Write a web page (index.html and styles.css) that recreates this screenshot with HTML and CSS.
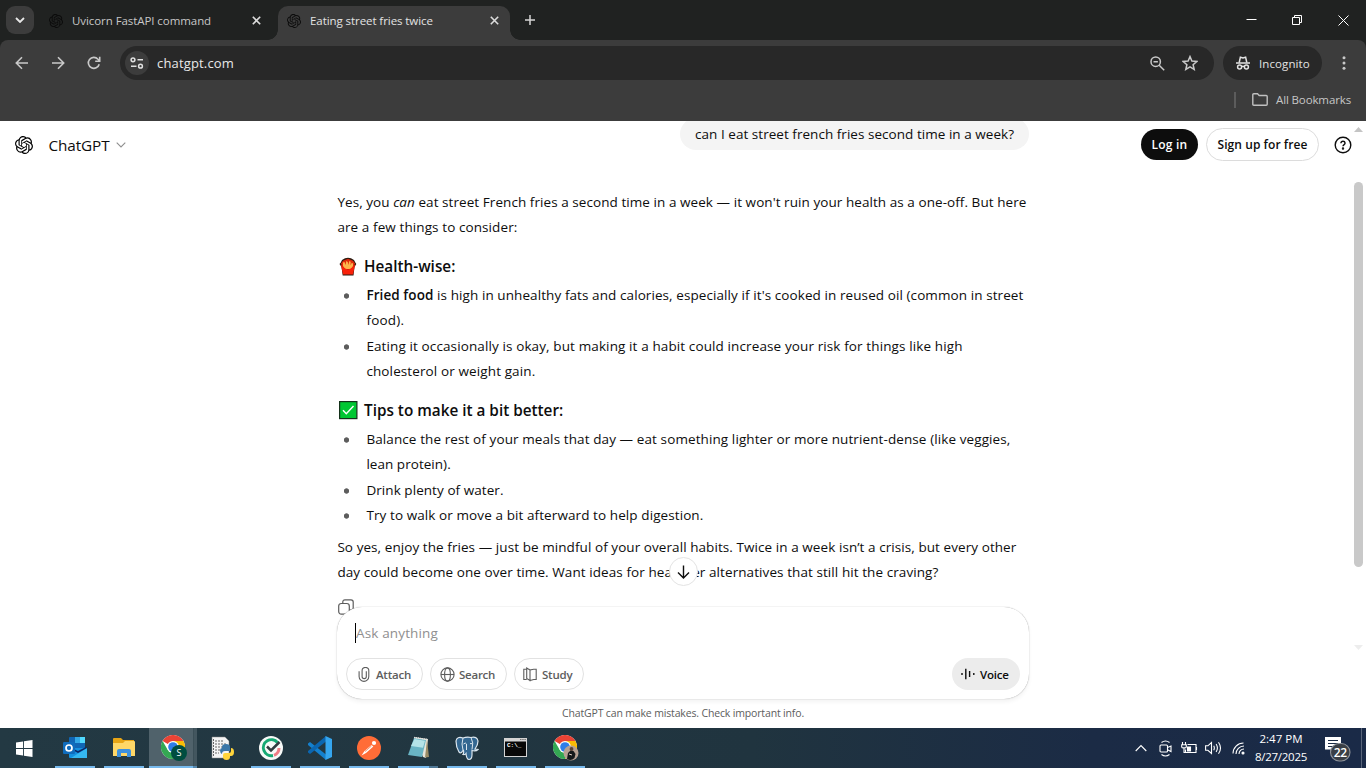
FILE: index.html
```html
<!DOCTYPE html>
<html lang="en">
<head>
<meta charset="utf-8">
<title>Eating street fries twice</title>
<link rel="stylesheet" href="styles.css">
</head>
<body>
<svg width="0" height="0" class="defs">
  <symbol id="knot" viewBox="0 0 24 24"><path d="M22.2819 9.8211a5.9847 5.9847 0 0 0-.5157-4.9108 6.0462 6.0462 0 0 0-6.5098-2.9A6.0651 6.0651 0 0 0 4.9807 4.1818a5.9847 5.9847 0 0 0-3.9977 2.9 6.0462 6.0462 0 0 0 .7427 7.0966 5.98 5.98 0 0 0 .511 4.9107 6.051 6.051 0 0 0 6.5146 2.9001A5.9847 5.9847 0 0 0 13.2599 24a6.0557 6.0557 0 0 0 5.7718-4.2058 5.9894 5.9894 0 0 0 3.9977-2.9001 6.0557 6.0557 0 0 0-.7475-7.0729zm-9.022 12.6081a4.4755 4.4755 0 0 1-2.8764-1.0408l.1419-.0804 4.7783-2.7582a.7948.7948 0 0 0 .3927-.6813v-6.7369l2.02 1.1686a.071.071 0 0 1 .038.0615v5.5826a4.504 4.504 0 0 1-4.4945 4.4944zm-9.6607-4.1254a4.4708 4.4708 0 0 1-.5346-3.0137l.142.0852 4.783 2.7582a.7712.7712 0 0 0 .7806 0l5.8428-3.3685v2.3324a.0804.0804 0 0 1-.0332.0615L9.74 19.9502a4.4992 4.4992 0 0 1-6.1408-1.6464zM2.3408 7.8956a4.485 4.485 0 0 1 2.3655-1.9728V11.6a.7664.7664 0 0 0 .3879.6765l5.8144 3.3543-2.0201 1.1685a.0757.0757 0 0 1-.071 0l-4.8303-2.7865A4.504 4.504 0 0 1 2.3408 7.872zm16.5963 3.8558L13.1038 8.364 15.1192 7.2a.0757.0757 0 0 1 .071 0l4.8303 2.7913a4.4944 4.4944 0 0 1-.6765 8.1042v-5.6772a.79.79 0 0 0-.407-.667zm2.0107-3.0231l-.142-.0852-4.7735-2.7818a.7759.7759 0 0 0-.7854 0L9.409 9.2297V6.8974a.0662.0662 0 0 1 .0284-.0615l4.8303-2.7866a4.4992 4.4992 0 0 1 6.6802 4.66zM8.3065 12.863l-2.02-1.1638a.0804.0804 0 0 1-.038-.0567V6.0742a4.4992 4.4992 0 0 1 7.3757-3.4537l-.142.0805L8.704 5.459a.7948.7948 0 0 0-.3927.6813zm1.0976-2.3654l2.602-1.4998 2.6069 1.4998v2.9994l-2.5974 1.4997-2.6067-1.4997Z"/></symbol>
  <symbol id="chrome" viewBox="0 0 24 24">
    <circle cx="12" cy="12" r="12" fill="#fff"/>
    <path fill="#ea4335" d="M12 12 1.6 6A12 12 0 0 1 22.4 6z"/>
    <path fill="#fbbc05" d="M12 6h10.4A12 12 0 0 1 12 24l5.2-9z"/>
    <path fill="#34a853" d="M1.6 6 6.8 15 12 17.8l3.6-.6L12 24A12 12 0 0 1 1.6 6z"/>
    <circle cx="12" cy="12" r="6" fill="#fff"/><circle cx="12" cy="12" r="4.8" fill="#2f7de9"/>
  </symbol>
</svg>

<header class="tabstrip">
  <div class="tab-search"><svg width="10" height="6" viewBox="0 0 10 6"><path d="M1 1l4 4 4-4" fill="none" stroke="#e8e8e8" stroke-width="1.8"/></svg></div>
  <div class="tab"><svg class="fav" width="14" height="14"><use href="#knot"/></svg><span class="tab-title t-tab1">Uvicorn FastAPI command</span><svg class="tab-x" width="9" height="9" viewBox="0 0 9 9"><path d="M.8.8l7.4 7.4M8.200.8L.8 8.200"/></svg></div>
  <div class="tab active"><svg class="fav" width="14" height="14"><use href="#knot"/></svg><span class="tab-title t-tab2">Eating street fries twice</span><svg class="tab-x" width="9" height="9" viewBox="0 0 9 9"><path d="M.8.8l7.4 7.4M8.200.8L.8 8.200"/></svg></div>
  <svg class="new-tab" width="10" height="10" viewBox="0 0 10 10"><path d="M5 0v10M0 5h10" stroke="#d5d5d5" stroke-width="1.5"/></svg>
  <div class="win-buttons">
    <svg width="11" height="11" viewBox="0 0 11 11"><path d="M.5 4.500h10"/></svg>
    <svg width="11" height="11" viewBox="0 0 11 11"><path d="M.5 2.500h7v7h-7zM2.500 2.500v-2h7v7h-2"/></svg>
    <svg width="11" height="11" viewBox="0 0 11 11"><path d="M.5.5l10 10M10.500.5l-10 10"/></svg>
  </div>
</header>

<div class="toolbar">
  <div class="nav-row">
    <svg class="nav" width="14" height="14" viewBox="0 0 14 14"><path d="M13 7H1.500M7 1.300L1.300 7 7 12.700"/></svg>
    <svg class="nav" width="14" height="14" viewBox="0 0 14 14"><path d="M1 7h11.500M7 1.300L12.700 7 7 12.700"/></svg>
    <svg class="nav" width="14" height="14" viewBox="0 0 14 14"><path d="M12.200 8.200A5.500 5.500 0 1 1 11 3.200l1.500 1.600M12.700.8v4.400H8.200"/></svg>
    <div class="omnibox">
      <span class="site-info"><svg width="14" height="12" viewBox="0 0 14 12"><circle cx="3" cy="2.800" r="1.900"/><path d="M7.500 2.800h5.500M1 9.200h5.500"/><circle cx="10.500" cy="9.200" r="1.900"/></svg></span>
      <span class="url">chatgpt.com</span>
      <svg class="ob-icon" width="15" height="15" viewBox="0 0 15 15"><circle cx="5.700" cy="5.700" r="4.700"/><path d="M9.200 9.200l5 5M3.500 5.700h4.400"/></svg>
      <svg class="ob-icon" width="16" height="16" viewBox="0 0 16 16"><path d="M8 1.600l1.900 4.500 4.900.4-3.700 3.200 1.100 4.700L8 11.900l-4.200 2.500 1.100-4.700L1.200 6.500l4.900-.4z"/></svg>
    </div>
    <div class="incognito">
      <svg width="14" height="14" viewBox="0 0 14 14"><path d="M0 7h14" /><path d="M3.200 6.500L4.400 1.200l2.600.7 2.600-.7 1.200 5.300"/><circle cx="3.600" cy="11" r="2"/><circle cx="10.400" cy="11" r="2"/><path d="M5.600 10.700q1.400-.8 2.800 0"/></svg>
      <span class="t-inc">Incognito</span>
    </div>
    <svg class="kebab" width="4" height="14" viewBox="0 0 4 14"><circle cx="2" cy="1.800" r="1.500"/><circle cx="2" cy="7" r="1.500"/><circle cx="2" cy="12.200" r="1.500"/></svg>
  </div>
  <div class="bookmarks">
    <i class="bm-sep"></i>
    <svg width="16" height="13" viewBox="0 0 16 13"><path d="M.8 1.800q0-1 1-1h3.700l1.700 1.700h7q1 0 1 1v7.700q0 1-1 1H1.800q-1 0-1-1z"/></svg>
    <span class="t-bm">All Bookmarks</span>
  </div>
</div>

<main class="page">
  <div class="thread">
    <div class="bubble"><span class="t-q">can I eat street french fries second time in a week?</span></div>
    <article class="answer">
      <p><span class="ln l1">Yes, you <em>can</em> eat street French fries a second time in a week — it won't ruin your health as a one-off. But here</span><span class="ln l2">are a few things to consider:</span></p>
      <h3><svg width="20" height="20" viewBox="0 0 20 20"><path d="M2.800 5.500L4 3l3-1.800 3-.5 3 .5 3 1.800 1.300 2.500L18.300 7l-1.800 3-1 8.500H4.700L3.500 10 1.500 7z" fill="#2b1a10"/><path d="M3 6.500l2-2.800L10 1.800l5 1.900 2 2.800-2 5H5z" fill="#e02a0c"/><path d="M5 9V5.500L6.500 5l1 3 .8-4 1.500 1 .5 3 1-4 1.400.8-.2 3.400 1.300-2.400L15 6.500V9l-2 3H7z" fill="#fdb44b"/><path d="M2.800 7.500l2.700 2.700q4.500 4 9 0l2.700-2.700-2.200 10H5z" fill="#f8210a"/></svg><span class="h1">Health-wise:</span></h3>
      <ul>
        <li><span class="ln l3"><b>Fried food</b> is high in unhealthy fats and calories, especially if it's cooked in reused oil (common in street</span><span class="ln l4">food).</span></li>
        <li><span class="ln l5">Eating it occasionally is okay, but making it a habit could increase your risk for things like high</span><span class="ln l6">cholesterol or weight gain.</span></li>
      </ul>
      <h3><svg width="20" height="20" viewBox="0 0 20 20"><rect x="1.600" y="1.600" width="17.300" height="17" fill="#00c732" stroke="#14311a" stroke-width="1.200"/><path d="M5 10.200l3.300 3.500L15.500 6" fill="none" stroke="#fff" stroke-width="1.400"/></svg><span class="h2">Tips to make it a bit better:</span></h3>
      <ul>
        <li><span class="ln l7">Balance the rest of your meals that day — eat something lighter or more nutrient-dense (like veggies,</span><span class="ln l8">lean protein).</span></li>
        <li><span class="ln l9">Drink plenty of water.</span></li>
        <li><span class="ln l10">Try to walk or move a bit afterward to help digestion.</span></li>
      </ul>
      <p class="last"><span class="ln l11">So yes, enjoy the fries — just be mindful of your overall habits. Twice in a week isn’t a crisis, but every other</span><span class="ln l12">day could become one over time. Want ideas for healthier alternatives that still hit the craving?</span></p>
      <svg class="copy" width="16" height="16" viewBox="0 0 16 16"><rect x=".7" y="4.500" width="10.600" height="10.600" rx="2.500"/><path d="M4.800 4.300V3q0-2.200 2.200-2.200h6q2.200 0 2.200 2.200v6q0 2-2.200 2.200h-1.500"/></svg>
    </article>
  </div>

  <div class="page-head">
    <svg class="logo" width="18" height="18"><use href="#knot"/></svg>
    <span class="brand">ChatGPT</span>
    <svg class="chev" width="10" height="6" viewBox="0 0 10 6"><path d="M.7.7L5 5 9.300.7" fill="none" stroke="#8f8f8f" stroke-width="1.100"/></svg>
    <button class="login"><span class="t-login">Log in</span></button>
    <button class="signup"><span class="t-signup">Sign up for free</span></button>
    <svg class="help" width="18" height="18" viewBox="0 0 18 18"><circle cx="9" cy="9" r="7.800"/><path d="M6.900 7.300q.2-2 2.100-2t2.100 1.800q0 1-1.200 1.700-.8.5-.9 1.500"/><circle cx="9" cy="12.500" r=".5"/></svg>
  </div>

  <div class="scrollbar"><i class="up"></i><i class="thumb"></i><i class="down"></i></div>

  <div class="dock">
    <div class="down-btn"><svg width="13" height="14" viewBox="0 0 13 14"><path d="M6.500.5v12.300M1 7.500l5.500 5.400L12 7.500"/></svg></div>
    <div class="composer">
      <div class="input"><span class="t-ask">Ask anything</span></div>
      <div class="actions">
        <button class="pill attach"><svg width="12" height="15" viewBox="0 0 12 15"><path d="M8.300 4.300v5.200a2.100 2.100 0 0 1-4.200 0V3.800a3.200 3.200 0 0 1 6.700 0v5.700a4.700 4.700 0 0 1-9.700 0V4.300"/></svg><span class="t-att">Attach</span></button>
        <button class="pill search"><svg width="15" height="15" viewBox="0 0 15 15"><circle cx="7.500" cy="7.500" r="6.600"/><ellipse cx="7.500" cy="7.500" rx="2.900" ry="6.600"/><path d="M1 7.500h13"/></svg><span class="t-sea">Search</span></button>
        <button class="pill study"><svg width="14" height="15" viewBox="0 0 14 15"><path d="M7 3v10.500l3.700-1h2.500V2.300h-2.500zM7 3L5.800 2.300M3.700 2.300H.8v10.200h2.900M3.700 1l3.300 2v10.500l-3.300-2z"/></svg><span class="t-stu">Study</span></button>
        <button class="voice"><svg width="14" height="12" viewBox="0 0 14 12"><path d="M1 5v2M4.800.8v10.400M8.600 3v6M12.800 5v2"/></svg><span class="t-voi">Voice</span></button>
      </div>
    </div>
    <div class="note"><span class="t-note">ChatGPT can make mistakes. Check important info.</span></div>
  </div>
</main>

<footer class="taskbar">
  <div class="task start"><svg width="17" height="17" viewBox="0 0 17 17"><path fill="#fff" d="M0 2.400l7-1v6.700H0zM7.900 1.300L16.500 0v8.100H7.900zM0 8.900h7v6.700l-7-1zM7.900 8.900h8.600V17l-8.600-1.300z"/></svg></div>
  <div class="task open"><svg width="26" height="24" viewBox="0 0 26 24"><rect x="7" y="1" width="16" height="12" rx="1" fill="#1066b5"/><path fill="#32a9e7" d="M13 1h10v6H13z"/><path fill="#50d9ff" d="M18 1h5v6h-5z"/><path fill="#0b4a8c" d="M8 7h5v8H8z"/><path fill="#1490df" d="M7 12h18v9q0 1-1 1H8q-1 0-1-1z"/><path fill="#35b8f1" d="M25 12v10L9 22z"/><path fill="#0a2767" d="M7 12l9 5 9-5-1-1-8 4-9-4z"/><rect x="1" y="6" width="12" height="12" rx="1.200" fill="#0f6cbd"/><circle cx="7" cy="12" r="3" fill="none" stroke="#fff" stroke-width="1.700"/></svg></div>
  <div class="task open"><svg width="22" height="20" viewBox="0 0 22 20"><path fill="#e8a515" d="M0 1q0-1 1-1h7l2 2h11v4H0z"/><path fill="#ffd767" d="M0 5h10l2-2h9q1 0 1 1v14H0z"/><path fill="#3e91dd" d="M4 19v-6q0-2 2-2h10q2 0 2 2v6h-4v-4H8v4z"/></svg></div>
  <div class="task open current"><svg width="28" height="26" viewBox="-2 0 28 26"><use href="#chrome" x="0" y="0" width="24" height="24"/><circle cx="18" cy="18" r="8" fill="#004d40"/><text x="18" y="21.200" text-anchor="middle" class="badge-s">S</text></svg></div>
  <div class="task"><svg width="26" height="24" viewBox="-2 0 26 24"><path fill="#f4f4f4" stroke="#888" stroke-width=".5" d="M1 1h13l4 4v17H1z"/><path stroke="#666" stroke-width="1" d="M4 5h9M4 8h11M4 11h10M4 14h5M4 17h4M2.500 3v17" stroke-dasharray="2 1"/><path fill="#3b77a8" d="M11 11q0-3 4-3t4 3v4h-5q-3 0-3 3-2-1-2-3.500T11 12z"/><path fill="#ffd43b" d="M20 12q3 0 3 4t-3 4h-1v1q0 3-3.500 3T12 21v-2q0-2 2-2h4q2 0 2-2z"/></svg></div>
  <div class="task open"><svg width="24" height="24" viewBox="0 0 24 24"><circle cx="12" cy="12" r="12" fill="#f7faf8"/><path d="M18.500 6.500A8 8 0 1 0 14 19.500" fill="none" stroke="#16a974" stroke-width="3"/><path d="M15 19.300A8 8 0 0 0 20 12" fill="none" stroke="#ef7d86" stroke-width="3"/><path d="M8 10.500l4 4L20.500 6" fill="none" stroke="#303b40" stroke-width="2.500"/></svg></div>
  <div class="task open"><svg width="24" height="24" viewBox="0 0 24 24"><path fill="#1480ce" d="M0 7.500L2 6l16 12.500V24L0 9z"/><path fill="#0b66b0" d="M0 16.500L2 18 18 5.500V0L0 15z"/><path fill="#35a6ef" d="M17.500 0L24 3v18l-6.500 3z"/></svg></div>
  <div class="task open"><svg width="24" height="24" viewBox="0 0 24 24"><circle cx="12" cy="12" r="12" fill="#ff6c37"/><path fill="#fff" d="M4.500 19.500L7.500 15l7-6 1.800 1.500-7.300 6.500z"/><circle cx="17" cy="7" r="2.100" fill="#fff"/><path stroke="#e2501e" d="M8 15.500l6.500-5.500" stroke-width=".6"/></svg></div>
  <div class="task open stacked"><svg width="24" height="24" viewBox="0 0 24 24"><path fill="#e8e5da" d="M8 1l14 2-2 19-3-1z"/><path fill="#9a8b65" d="M21 4l2 17-4 .5z"/><path fill="#69b4c4" d="M8 2l12 2-4 17-14-2z"/><path fill="#b5e3e8" d="M8.500 3l10.500 1.800-2 7L5 10z"/><path stroke="#ddd" stroke-width="1.500" stroke-dasharray="1 1" d="M8 1.500l13 2"/></svg></div>
  <div class="task open"><svg width="24" height="25" viewBox="0 0 24 25"><path fill="#336791" stroke="#dce7ef" stroke-width="1.200" d="M8 2Q2 0 1 5q0 6 3 11 2 2 3.500-1l1-.5q.5 3-.5 4 2 .5 3-1 .5 6 3 6 3 0 3-5v-4q4 1 6-1l-3-.5Q23 9 23 5q-1-5-7-3.500Q12 .5 8 2z"/><path fill="none" stroke="#dce7ef" d="M8 2Q6 8 8 14M16 1.500q3 5 1 12M8.500 8q2-2 3 0v6M15 7.500q1 .5 2 0"/></svg></div>
  <div class="task open"><svg width="24" height="20" viewBox="0 0 24 20"><path fill="#d4d4d4" d="M0 0h23v19H0z"/><path fill="#080808" d="M1 3.500h21V18H1z"/><path stroke="#777" stroke-width="1" d="M16 1.500h6" stroke-dasharray="1.500 .7"/><text x="3" y="9" class="cmd">C:\_</text></svg></div>
  <div class="task open"><svg width="28" height="26" viewBox="-2 0 28 26"><use href="#chrome" x="0" y="0" width="24" height="24"/><circle cx="18" cy="18" r="7.500" fill="#b7a193"/><path fill="#16191b" d="M14 24l1-6 2.500-2.500 3 .5 2 3-1 4q-3.500 3.500-7.500 1z"/><circle cx="18.500" cy="14" r="1.900" fill="#5b4337"/><path stroke="#e6d3c6" stroke-width="1" d="M16 19l3 1"/></svg></div>

  <div class="tray">
    <svg class="tr-up" width="12" height="8" viewBox="0 0 12 8"><path d="M.7 7L6 1.500 11.300 7"/></svg>
    <svg class="tr-cam" width="13" height="17" viewBox="0 0 13 17"><rect x="1" y="5" width="7.500" height="7" rx="1"/><path d="M8.500 7.500L12 6v5.500l-3.500-1.700M2.500 2.500q4-3 8 0M2.500 14.500q4 3 8 0"/></svg>
    <svg class="tr-bat" width="17" height="12" viewBox="0 0 17 12"><path d="M6.500 2.500H15v8H4.500V7.500M15.500 5v3M1.500 0v2.500M4.500 0v2.500M.7 2.700h4.600v2.200q0 1-2.300 1t-2.300-1zM3 6v4.500h2"/><path d="M6.500 5h3v4h-3z" fill="#fff"/></svg>
    <svg class="tr-vol" width="17" height="14" viewBox="0 0 17 14"><path d="M.6 4.800h2.300L6.500 1.500v11L2.900 9.300H.6zM8.700 4.800q1.300 2.200 0 4.400M11.100 3q2.600 4 0 8M13.500 1.200q4 5.800 0 11.600"/></svg>
    <svg class="tr-net" width="13" height="13" viewBox="0 0 13 13"><path d="M1 11.500A10.500 10.500 0 0 1 11.500 1M4 12a8 8 0 0 1 8-8M7 12a5 5 0 0 1 5-5"/><circle cx="11" cy="11" r="1" fill="#fff"/></svg>
    <div class="clock"><span class="t-time">2:47 PM</span><span class="t-date">8/27/2025</span></div>
    <svg class="tr-note" width="28" height="28" viewBox="0 0 28 28"><path fill="#fff" d="M0 3h16v12.500H9l-3.500 3.500v-3.500H0z"/><path stroke="#1a2b45" stroke-width="1" d="M3 6.500h10M3 9.500h10M3 12.500h6"/><rect x="5.500" y="9.500" width="19.500" height="17.500" rx="8.700" fill="#3a3f46" stroke="#8d9299"/><text x="15.300" y="22.500" text-anchor="middle" class="count">22</text></svg>
    <i class="desk"></i>
  </div>
</footer>
</body>
</html>
```
FILE: styles.css
```css
* { box-sizing: border-box; }
body { margin: 0; width: 1366px; height: 768px; overflow: hidden; display: flex; flex-direction: column; font-family: "Open Sans", "Noto Sans", sans-serif; background: #202221; }
svg { display: block; flex: none; }
span { white-space: nowrap; }
button { font-family: inherit; margin: 0; padding: 0; border: 0; background: none; }
.defs { position: absolute; }

/* browser chrome */
.tabstrip { height: 40px; flex: none; background: #202221; display: flex; padding-left: 6px; }
.tab-search { width: 28px; height: 28px; margin: 6px 6px 0 0; border-radius: 9px; background: #3c3c3c; display: flex; align-items: center; justify-content: center; }
.tab { width: 232px; margin-top: 6px; height: 34px; display: flex; align-items: center; padding: 0 11px 5px 9px; font-size: 11.500px; color: #c7c7c7; border-radius: 10px 10px 0 0; }
.tab:not(.active) { margin-right: 6px; }
.tab.active { background: #3c3c3c; color: #e3e3e3; position: relative; }
.tab.active::before, .tab.active::after { content: ""; position: absolute; bottom: 0; width: 10px; height: 10px; }
.tab.active::before { left: -10px; background: radial-gradient(circle at 0 0, transparent 9.500px, #3c3c3c 10px); }
.tab.active::after { right: -10px; background: radial-gradient(circle at 100% 0, transparent 9.500px, #3c3c3c 10px); }
.fav { fill: #0b0b0b; }
.tab .fav { margin-right: 9px; }
.tab-title { line-height: 16px; }
.t-tab1, .t-tab2 { letter-spacing: -.07px; }
.tab-x { margin-left: auto; stroke: #dcdcdc; stroke-width: 1.6; }
.new-tab { margin: 15px 0 0 15px; }
.win-buttons { margin-left: auto; display: flex; gap: 35px; padding: 15px 17px 0 0; }
.win-buttons svg { fill: none; stroke: #fff; stroke-width: 1; }
.toolbar { height: 81px; flex: none; background: #3c3c3c; border-radius: 8px 8px 0 0; }
.nav-row { display: flex; align-items: center; height: 46px; padding-left: 15px; }
.nav { margin-right: 22px; fill: none; stroke: #c9c9c9; stroke-width: 1.6; }
.nav + .nav + .nav { margin-right: 19px; }
.omnibox { width: 1094px; height: 34px; border-radius: 17px; background: #282828; display: flex; align-items: center; padding: 0 16px 0 5px; }
.site-info { width: 24px; height: 24px; border-radius: 50%; background: #3c3c3c; display: flex; align-items: center; justify-content: center; }
.site-info svg { fill: none; stroke: #e0e0e0; stroke-width: 1.5; }
.url { margin-left: 8px; font-size: 13px; color: #e8e8e8; margin-right: auto; letter-spacing: .16px; }
.ob-icon { margin-left: 17px; fill: none; stroke: #c9c9c9; stroke-width: 1.5; }
.incognito { width: 99px; height: 34px; margin-left: 9px; border-radius: 17px; background: #282828; display: flex; align-items: center; padding-left: 13px; gap: 9px; color: #e3e3e3; font-size: 11.500px; letter-spacing: .1px; }
.incognito svg { fill: none; stroke: #e3e3e3; stroke-width: 1.5; }
.kebab { margin-left: 20px; fill: #c9c9c9; }
.bookmarks { display: flex; align-items: center; justify-content: flex-end; height: 27px; padding-right: 15px; color: #c7c7c7; font-size: 11.500px; letter-spacing: -.126px; }
.bm-sep { width: 2px; height: 16px; background: #5c5c5c; margin-right: 16px; }
.bookmarks svg { margin-right: 8px; fill: none; stroke: #c0c0c0; stroke-width: 1.4; }

/* chat page */
.page { height: 607px; flex: none; position: relative; overflow: hidden; background: #fff; color: #0d0d0d; }
.thread { width: 692px; margin: -3px auto 0; display: flex; flex-direction: column; font-size: 13.500px; line-height: 25.200px; }
.bubble { align-self: flex-end; height: 32px; width: 349px; padding-left: 15px; background: #f4f4f4; border-radius: 16px; line-height: 32px; letter-spacing: .038px; }
.answer { padding-top: 39.600px; }
.answer p { margin: 0; }
.ln { display: block; padding-left: .4px; }
.l1 { letter-spacing: .062px; }
.l2 { letter-spacing: .093px; }
.l3 { letter-spacing: .085px; }
.l4 { letter-spacing: .2px; }
.l5, .l6 { letter-spacing: .115px; }
.l7 { letter-spacing: .1px; }
.l8 { letter-spacing: .04px; }
.l9 { letter-spacing: .06px; }
.l10 { letter-spacing: .091px; }
.l11 { letter-spacing: .07px; }
.l12 { letter-spacing: .078px; }
.answer h3 { margin: 14px 0 4px; height: 25px; display: flex; align-items: center; font-size: 15.300px; font-weight: 600; }
.answer h3 svg { margin: 0 6px 0 1px; }
.answer ul { margin: 0; padding: 0; list-style: none; }
.answer li { padding-left: 29px; background: radial-gradient(circle at 9.500px 13px, #5d5d5d 2.300px, transparent 3px) no-repeat; }
.answer li + li { position: relative; top: .5px; }
.answer b { font-weight: 600; }
.answer .last { margin-top: 7px; }
.copy { margin: 14px 0 0 1px; fill: none; stroke: #5d5d5d; stroke-width: 1.200; }
.page-head { position: absolute; top: 0; left: 0; width: 1352px; height: 47px; display: flex; align-items: center; padding-left: 15px; }
.brand { margin-left: 15.500px; font-size: 15.300px; letter-spacing: -.1px; }
.chev { margin-left: 6px; }
.login { margin-left: auto; width: 57px; height: 31px; border-radius: 16px; background: #0d0d0d; color: #fff; font-size: 12px; font-weight: 600; letter-spacing: .2px; }
.signup { margin-left: 8px; width: 113px; height: 33px; border-radius: 17px; border: 1px solid #dcdcdc; background: #fff; color: #0d0d0d; font-size: 12px; font-weight: 600; letter-spacing: .07px; }
.help { margin-left: 15px; fill: none; stroke: #0d0d0d; stroke-width: 1.400; }
.scrollbar { position: absolute; top: 0; right: 0; width: 15px; height: 535px; }
.scrollbar i { display: block; margin-left: 3px; width: 9px; }
.up { height: 5px; margin-top: 6px; background: #c4c4c4; clip-path: polygon(50% 0, 100% 100%, 0 100%); }
.scrollbar .thumb { margin-top: 50px; height: 385px; border-radius: 5px; background: #c9c9c9; }
.scrollbar .down { margin-top: 78px; height: 5px; background: #ededed; clip-path: polygon(0 0, 100% 0, 50% 100%); }
.dock { position: absolute; left: 337px; bottom: 0; width: 692px; display: flex; flex-direction: column; align-items: center; }
.down-btn { width: 29px; height: 29px; border-radius: 50%; background: #fff; border: 1px solid #e3e3e3; display: flex; align-items: center; justify-content: center; margin-bottom: 21px; }
.down-btn svg { fill: none; stroke: #0d0d0d; stroke-width: 1.400; }
.composer { width: 692px; height: 92px; border-radius: 25px; background: #fff; box-shadow: 0 0 1px rgba(0,0,0,.45), 0 3px 4px rgba(0,0,0,.05); padding: 16px 9px 9px; display: flex; flex-direction: column; }
.input { margin-left: 9px; height: 20px; line-height: 20px; border-left: 1px solid #000; font-size: 13.500px; color: #8f8f8f; letter-spacing: .147px; }
.actions { margin-top: 15px; display: flex; gap: 7px; }
.pill, .voice { height: 32px; border: 1px solid #e2e2e2; border-radius: 16px; display: flex; align-items: center; font-size: 11.500px; font-weight: 600; color: #5d5d5d; letter-spacing: -.24px; }
.pill svg { fill: none; stroke: #5d5d5d; stroke-width: 1.100; }
.attach { width: 77px; padding-left: 11px; gap: 6px; }
.search { width: 77px; padding-left: 9px; gap: 4px; }
.study { width: 70px; padding-left: 8px; gap: 5px; }
.voice { width: 68px; margin-left: auto; border: 0; background: #ececec; color: #0d0d0d; padding-left: 9px; gap: 5px; }
.voice svg { stroke: #0d0d0d; stroke-width: 1.400; }
.note { height: 29px; line-height: 29px; font-size: 10.500px; color: #5d5d5d; letter-spacing: -.156px; }

/* taskbar */
.taskbar { height: 40px; flex: none; display: flex; background: linear-gradient(90deg, #233943, #20343f 55%, #1b2b45 80%, #1a2a47); }
.task { width: 49px; height: 40px; display: flex; align-items: center; justify-content: center; position: relative; }
.start { width: 48px; margin-right: 2px; }
.open::after { content: ""; position: absolute; left: 5px; right: 4px; bottom: 0; height: 2px; background: #76b9ed; }
.current { background: linear-gradient(90deg, transparent 1px, #50626b 1px, #50626b 45px, #33474f 45px, #43565f 46px); }
.current::after { left: 1px; right: 0; background: linear-gradient(90deg, #76b9ed 44px, #5587ad 44px); }
.stacked::after { background: linear-gradient(90deg, #76b9ed 31px, #4f7896 31px); }
.badge-s { font-size: 9px; fill: #fff; font-weight: 400; }
.cmd { font: 700 6px "Liberation Mono", monospace; fill: #fff; }
.tray { margin-left: auto; display: flex; align-items: center; color: #fff; }
.tray svg { fill: none; stroke: #fff; stroke-width: 1.100; }
.tr-up { margin-right: 12px; }
.tr-cam { margin-right: 9px; }
.tr-bat { margin-right: 7px; }
.tr-vol { margin-right: 10px; }
.clock { display: flex; flex-direction: column; align-items: center; width: 72px; font-size: 11.500px; line-height: 18px; }
.t-date { letter-spacing: -.27px; }
.tray .tr-note { stroke: none; margin: 0 0 0 8px; }
.tray .tr-note text { stroke: none; }
.count { font-size: 12px; font-weight: 600; fill: #fff; letter-spacing: -.3px; }
.desk { width: 1px; height: 40px; background: #59657a; margin: 0 4px 0 8px; }
```
